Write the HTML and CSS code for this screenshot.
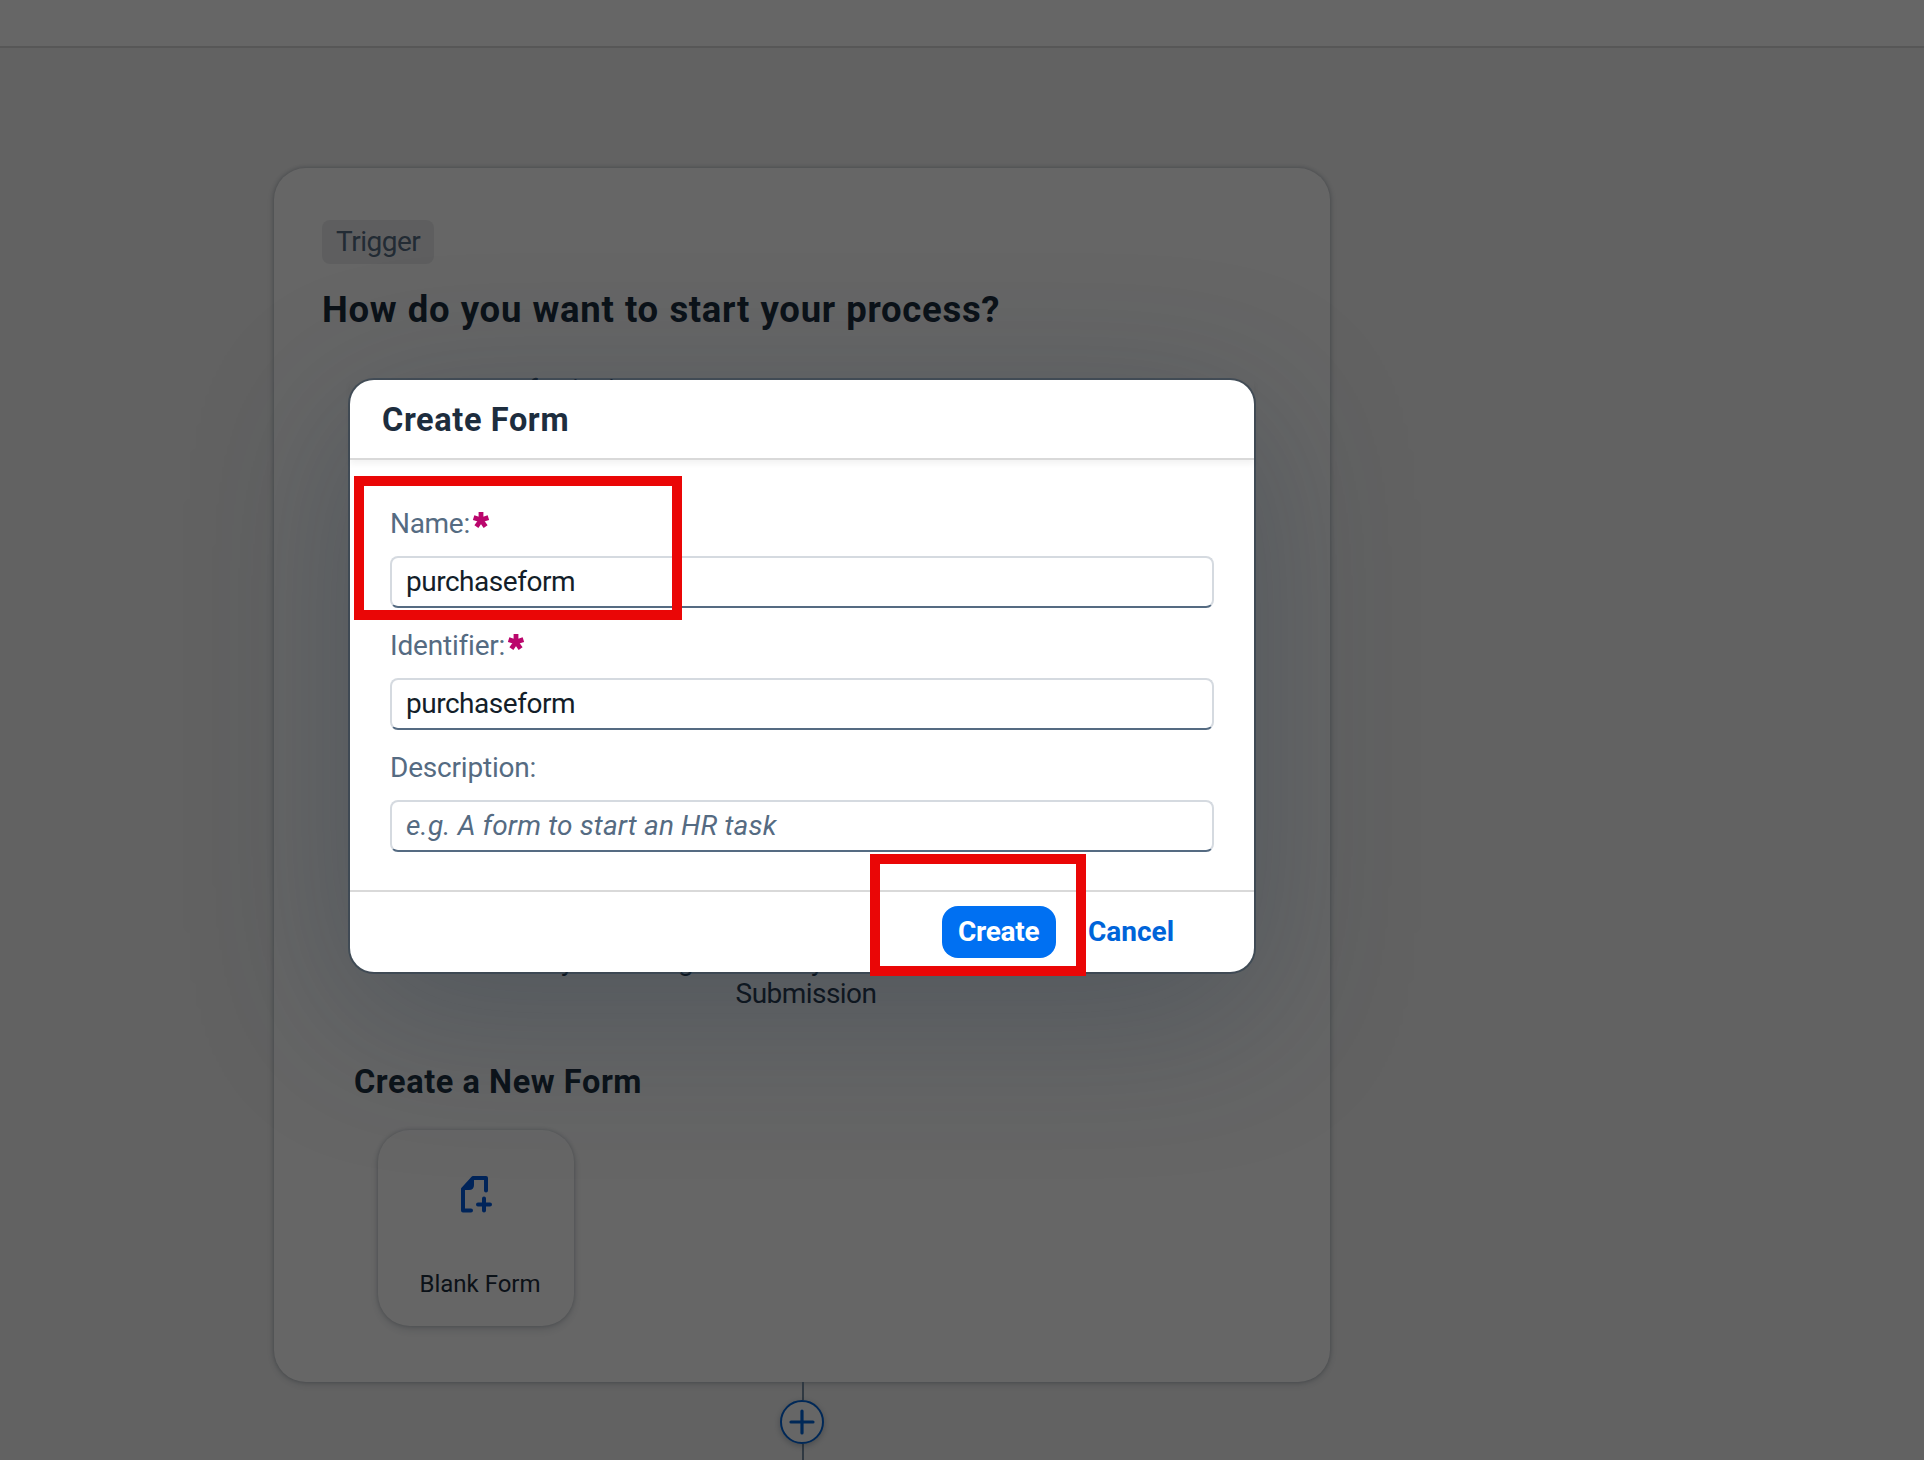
FILE: index.html
```html
<!DOCTYPE html>
<html lang="en">
<head>
<meta charset="utf-8">
<title>Create Form</title>
<link rel="stylesheet" href="styles.css">
</head>
<body>
<div class="app">
  <header class="topbar"></header>
  <main class="canvas">
    <section class="card">
      <span class="tag"><span class="t-tag">Trigger</span></span>
      <h1 class="question">How do you want to start your process?</h1>
      <p class="option"><span>f</span><span>i</span><span>i</span></p>
      <div class="desc">
        <p class="desc-line"><span>y</span><span>g</span><span>y</span><span>g</span></p>
        <p class="t-sub">Submission</p>
      </div>
      <h2 class="subhead">Create a New Form</h2>
      <div class="tile">
        <svg class="tile-icon" width="34" height="38" viewBox="0 0 34 38" fill="none" stroke="#005adf" stroke-width="4" stroke-linecap="round" stroke-linejoin="round">
          <path d="M11 35.5H3V14L13 3H26V15.5"/>
          <path d="M13 3L3 14H9Q13 14 13 10Z" fill="#005adf" stroke-width="2"/>
          <path d="M24 23.5V35.5M18 29.500H30"/>
        </svg>
        <span class="tile-label">Blank Form</span>
      </div>
    </section>
    <div class="connector">
      <i class="stem"></i>
      <svg class="add" width="44" height="44" viewBox="0 0 44 44" fill="none" stroke="#0064d9" stroke-linecap="round">
        <circle cx="22" cy="22" r="21" fill="#fff" stroke-width="2"/>
        <path d="M22 11V33M11 22H33" stroke-width="3.2"/>
      </svg>
      <i class="stem"></i>
    </div>
  </main>
</div>
<div class="overlay">
  <form class="dialog">
    <div class="dialog-head"><h2 class="title">Create Form</h2></div>
    <div class="dialog-body">
      <div class="field"><label><span class="t-name">Name:</span><svg class="req" width="16" height="16" viewBox="0 0 16 16"><path d="M8 8V0M8 8L.6 5.6M8 8L15.4 5.6M8 8L3.4 14.6M8 8L12.6 14.6"/></svg></label><div class="input">purchaseform</div></div>
      <div class="field"><label><span class="t-ident">Identifier:</span><svg class="req" width="16" height="16" viewBox="0 0 16 16"><path d="M8 8V0M8 8L.6 5.6M8 8L15.4 5.6M8 8L3.4 14.6M8 8L12.6 14.6"/></svg></label><div class="input">purchaseform</div></div>
      <div class="field"><label><span class="t-descr">Description:</span></label><div class="input hint">e.g. A form to start an HR task</div></div>
    </div>
    <div class="dialog-foot"><div class="primary">Create</div><div class="cancel">Cancel</div></div>
  </form>
</div>
<div class="marker marker-name"></div>
<div class="marker marker-create"></div>
</body>
</html>
```
FILE: styles.css
```css
* { box-sizing: border-box; margin: 0; }
body { width: 1924px; height: 1460px; overflow: hidden; position: relative; font: 28px/36px Roboto, "Liberation Sans", sans-serif; color: #1d2d3e; white-space: nowrap; }
.app { height: 1460px; background: #f5f5f5; }
.topbar { height: 48px; background: #fff; border-bottom: 2px solid #d9d9d9; }
.canvas { padding: 120px 0 0 274px; }
.card { width: 1056px; height: 1214px; background: #fff; border-radius: 32px; box-shadow: 0 0 4px rgba(34,53,72,.3), 0 2px 8px rgba(34,53,72,.15); padding: 52px 48px 0; }
.tag { display: flex; align-items: center; width: 112px; height: 44px; padding-left: 14px; background: #eaecee; border-radius: 8px; color: #556b82; letter-spacing: -.5px; }
.question { font-size: 36.5px; line-height: 44px; margin-top: 24px; font-weight: 700; letter-spacing: .68px; word-spacing: .8px; }
/* Lines partly covered by the dialog */
.option { display: flex; line-height: 33px; margin: 41px 0 0 206px; }
.option span:nth-child(1) { width: 44px; }
.option span:nth-child(2) { width: 36px; }
.desc { margin-top: 538px; line-height: 33px; }
.desc-line { display: flex; padding-left: 239px; }
.desc-line span:nth-child(1) { width: 117px; }
.desc-line span:nth-child(2) { width: 133px; }
.desc-line span:nth-child(3) { width: 137px; }
.t-sub { text-align: center; letter-spacing: -.55px; padding-left: 8px; }
.subhead { font-size: 32.5px; line-height: 40px; margin: 52px 0 0 32px; letter-spacing: .58px; }
.tile { margin: 28px 0 0 56px; width: 196px; height: 196px; border-radius: 32px; background: #fff; box-shadow: 0 0 4px rgba(34,53,72,.25), 0 4px 8px rgba(34,53,72,.15); display: flex; flex-direction: column; align-items: center; padding: 45px 0 0 1px; }
.tile-label { font-size: 24px; line-height: 32px; margin-top: 55px; padding-left: 7px; }
.connector { width: 1056px; display: flex; flex-direction: column; align-items: center; }
.stem { width: 2px; height: 18px; background: #788fa6; margin-left: 2px; }
.add { filter: drop-shadow(0 2px 3px rgba(34,53,72,.3)); }
.overlay { position: absolute; inset: 0; background: rgba(0,0,0,.6); padding: 380px 0 0 350px; }
.dialog { width: 904px; height: 592px; background: #fff; border-radius: 24px; box-shadow: 0 0 0 2px rgba(34,53,72,.48), 0 40px 160px rgba(34,53,72,.3); }
.dialog-head { height: 80px; border-bottom: 2px solid #d9d9d9; padding: 20px 32px; box-shadow: 0 4px 6px rgba(0,0,0,.05); }
.title { font-size: 32.5px; line-height: 40px; letter-spacing: .62px; }
.dialog-body { height: 430px; padding: 40px 40px 0; }
.field { height: 122px; }
.field label { display: flex; height: 56px; padding-top: 6px; color: #556b82; }
.t-name { letter-spacing: -.3px; }
.t-ident { letter-spacing: -.2px; }
.t-descr { letter-spacing: -.2px; }
.req { margin: 6px 0 0 3px; fill: none; stroke: #ba066c; stroke-width: 4.8; overflow: visible; }
.input { height: 52px; border: 2px solid #d5dae0; border-bottom-color: #556b82; border-radius: 8px; padding: 6px 14px; color: #131e29; letter-spacing: -.48px; }
.hint { color: #556b82; font-style: italic; letter-spacing: .16px; }
.dialog-foot { height: 82px; border-top: 2px solid #d9d9d9; display: flex; padding: 14px 0 0 592px; font-weight: 700; }
.primary, .cancel { height: 52px; line-height: 52px; }
.primary { width: 114px; padding-left: 16px; background: #0070f2; border-radius: 16px; color: #fff; letter-spacing: -.3px; }
.cancel { padding-left: 32px; color: #0064d9; }
.marker { position: absolute; border: 10px solid #ea0606; }
.marker-name { left: 354px; top: 476px; width: 328px; height: 144px; }
.marker-create { left: 870px; top: 854px; width: 216px; height: 122px; }
```
